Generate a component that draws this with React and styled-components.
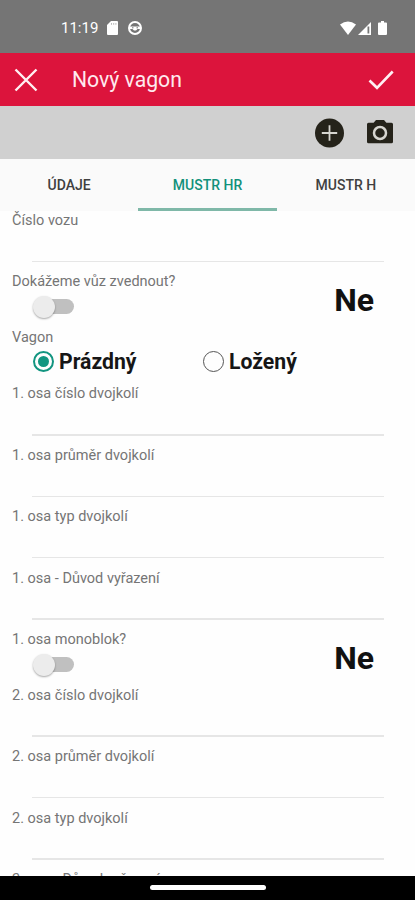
import React, { useState } from "react";
import styled, { createGlobalStyle } from "styled-components";

const GlobalStyle = createGlobalStyle`
  * {
    box-sizing: border-box;
  }

  body {
    margin: 0;
    background-color: #fff;
    font-family: Roboto, "Liberation Sans", sans-serif;
  }

  button {
    background: none;
    border: 0;
    padding: 0;
    font-family: inherit;
  }
`;

const Screen = styled.main`
  display: flex;
  flex-direction: column;
  width: 415px;
  height: 900px;
  overflow: hidden;
  background-color: #fefefe;
`;

const StatusBar = styled.div`
  display: flex;
  align-items: center;
  justify-content: space-between;
  flex: none;
  height: 53px;
  padding: 3px 28px 0 61px;
  background-color: #757575;
  color: #fff;
`;

const StatusGroup = styled.div`
  display: flex;
  align-items: center;
  gap: ${(props) => props.$gap};
`;

const Clock = styled.span`
  width: 38px;
  font-size: 15px;
  white-space: nowrap;
`;

const SteeringWheel = styled.svg`
  margin-left: 2px;
`;

const Battery = styled.svg`
  margin-left: 5px;
`;

const Header = styled.header`
  display: flex;
  align-items: center;
  flex: none;
  height: 53px;
  padding: 0 21px 0 14px;
  background-color: #dc143c;
  color: #fff;
`;

const Title = styled.h1`
  flex: 1;
  margin: 0 0 0 34px;
  font-size: 21.2px;
  font-weight: 400;
  color: #ffe9ee;
`;

const IconButton = styled.button`
  display: flex;
`;

const Toolbar = styled.div`
  display: flex;
  align-items: center;
  justify-content: flex-end;
  gap: 22px;
  flex: none;
  height: 53px;
  padding: 0 21px 0 0;
  background-color: #d0d0d0;
`;

const Tabs = styled.nav`
  display: flex;
  flex: none;
  height: 52px;
  background-color: #fafafa;
`;

const Tab = styled.button`
  flex: 1;
  padding-top: 3px;
  border-bottom: 3px solid ${(props) => (props.$active ? "#7fb8a8" : "transparent")};
  color: ${(props) => (props.$active ? "#12917a" : "#404040")};
  font-size: 14px;
  font-weight: 500;
`;

const Form = styled.section`
  flex: 1;
  min-height: 0;
  overflow: hidden;
`;

const Row = styled.div`
  height: ${(props) => props.$height};
  padding: 0 31px 0 12px;
`;

const Label = styled.div`
  height: 18px;
  line-height: 20px;
  font-size: 14.5px;
  color: #757575;
  white-space: nowrap;
`;

const Line = styled.div`
  height: 1.5px;
  margin: 31.7px 0 0 20px;
  background-color: #e6e6e6;
`;

const SwitchRow = styled.div`
  display: flex;
  align-items: flex-start;
  justify-content: space-between;
  height: 55.7px;
  padding: 0 41px 0 12px;
`;

const Answer = styled.span`
  margin-top: 8.6px;
  font-size: 32px;
  font-weight: 700;
  line-height: 38px;
  color: #111;
`;

const Track = styled.button`
  display: flex;
  align-items: center;
  width: 40px;
  height: 15px;
  margin: 9px 0 0 22px;
  border-radius: 8px;
  background-color: #c0c0c0;
`;

const Thumb = styled.span`
  flex: none;
  width: 22px;
  height: 22px;
  margin-left: ${(props) => (props.$on ? "19px" : "-1px")};
  border-radius: 50%;
  background-color: #ececec;
  box-shadow: 0 1px 2px rgba(0, 0, 0, 0.35);
`;

const Options = styled.div`
  display: grid;
  grid-template-columns: 170px 1fr;
  margin-left: 21px;
`;

const Option = styled.button`
  display: flex;
  align-items: center;
  gap: 5px;
  height: 30px;
  font-size: 21.2px;
  font-weight: 700;
  color: #161616;
`;

const Radio = styled.span`
  display: flex;
  align-items: center;
  justify-content: center;
  width: 21px;
  height: 21px;
  border: 2px solid ${(props) => (props.$checked ? "#129580" : "#555")};
  border-width: ${(props) => (props.$checked ? "2px" : "1.5px")};
  border-radius: 50%;

  &::after {
    content: "";
    width: 11px;
    height: 11px;
    border-radius: 50%;
    background-color: ${(props) => (props.$checked ? "#129580" : "transparent")};
  }
`;

const NavigationBar = styled.footer`
  display: flex;
  justify-content: center;
  flex: none;
  height: 24px;
  padding-top: 9px;
  background-color: #000;
`;

const HomeHandle = styled.div`
  width: 116px;
  height: 5px;
  border-radius: 3px;
  background-color: #fff;
`;

function Field({ label }) {
  return (
    <Row $height="61.4px">
      <Label>{label}</Label>
      <Line />
    </Row>
  );
}

function SwitchField({ label }) {
  const [on, setOn] = useState(false);
  return (
    <SwitchRow>
      <div>
        <Label>{label}</Label>
        <Track onClick={() => setOn(!on)}>
          <Thumb $on={on} />
        </Track>
      </div>
      <Answer>{on ? "Ano" : "Ne"}</Answer>
    </SwitchRow>
  );
}

function RadioField({ label, options }) {
  const [selected, setSelected] = useState(options[0]);
  return (
    <Row $height="56.4px">
      <Label>{label}</Label>
      <Options>
        {options.map((option) => (
          <Option key={option} onClick={() => setSelected(option)}>
            <Radio $checked={option === selected} />
            {option}
          </Option>
        ))}
      </Options>
    </Row>
  );
}

function App() {
  const [tab, setTab] = useState("MUSTR HR");
  return (
    <Screen>
      <GlobalStyle />
      <StatusBar>
        <StatusGroup $gap="8px">
          <Clock>11:19</Clock>
          <svg width="11" height="14" viewBox="0 0 11 14">
            <path d="M4 0h6q1 0 1 1v12q0 1-1 1H1q-1 0-1-1V4z" fill="#fff" />
            <path d="M4.5 2v1.8M6.7 2v1.8M8.9 2v1.8" stroke="#bbb" />
          </svg>
          <SteeringWheel width="14" height="14" viewBox="0 0 14 14">
            <circle cx="7" cy="7" r="6" fill="none" stroke="#fff" strokeWidth="2" />
            <path d="M1 5.5h12v2.5H9.5L8 9.5H6L4.5 8H1z" fill="#fff" />
            <path d="M4 6.8h1.5M8.5 6.8H10" stroke="#757575" />
          </SteeringWheel>
        </StatusGroup>
        <StatusGroup $gap="2px">
          <svg width="16" height="14" viewBox="0 0 16 14">
            <path d="M0 3.6Q8-2.6 16 3.6L8 14z" fill="#fff" />
          </svg>
          <svg width="13" height="13" viewBox="0 0 13 13">
            <path d="M13 0v13H0z" fill="#fff" />
            <path d="M10.4 4.5v7" stroke="#757575" strokeWidth="1.8" />
          </svg>
          <Battery width="9" height="14" viewBox="0 0 9 14">
            <path d="M3 0h3v1.4h2q1 0 1 1V13q0 1-1 1H1q-1 0-1-1V2.4q0-1 1-1h2z" fill="#fff" />
          </Battery>
        </StatusGroup>
      </StatusBar>
      <Header>
        <IconButton aria-label="Zavřít">
          <svg width="24" height="24" viewBox="0 0 24 24">
            <path d="M1.5 1.5l21 21M22.5 1.5l-21 21" stroke="#fff0f3" strokeWidth="2.4" />
          </svg>
        </IconButton>
        <Title>Nový vagon</Title>
        <IconButton aria-label="Uložit">
          <svg width="26" height="20" viewBox="0 0 26 20">
            <path d="M1.5 10.5l7.5 7.3L24.7 1.5" fill="none" stroke="#fff0f3" strokeWidth="2.6" />
          </svg>
        </IconButton>
      </Header>
      <Toolbar>
        <IconButton aria-label="Přidat">
          <svg width="30" height="30" viewBox="0 0 30 30">
            <circle cx="15.5" cy="15" r="14.5" fill="#25231a" />
            <path d="M15.5 7.3v15.4M7.8 15h15.4" stroke="#d6d5cf" strokeWidth="1.8" />
          </svg>
        </IconButton>
        <IconButton aria-label="Fotoaparát">
          <svg width="28" height="26" viewBox="0 0 28 26">
            <path
              d="M10 0h8l2.4 2.7H25.5q1.5 0 1.5 1.5V21.7q0 1.5-1.5 1.5H2.5q-1.5 0-1.5-1.5V4.2q0-1.5 1.5-1.5h5.1z"
              fill="#25231a"
            />
            <circle cx="14" cy="13" r="6" fill="none" stroke="#d6d5cf" strokeWidth="2.5" />
          </svg>
        </IconButton>
      </Toolbar>
      <Tabs>
        {["ÚDAJE", "MUSTR HR", "MUSTR H"].map((name) => (
          <Tab key={name} $active={name === tab} onClick={() => setTab(name)}>
            {name}
          </Tab>
        ))}
      </Tabs>
      <Form>
        <Field label="Číslo vozu" />
        <SwitchField label="Dokážeme vůz zvednout?" />
        <RadioField label="Vagon" options={["Prázdný", "Ložený"]} />
        <Field label="1. osa číslo dvojkolí" />
        <Field label="1. osa průměr dvojkolí" />
        <Field label="1. osa typ dvojkolí" />
        <Field label="1. osa - Důvod vyřazení" />
        <SwitchField label="1. osa monoblok?" />
        <Field label="2. osa číslo dvojkolí" />
        <Field label="2. osa průměr dvojkolí" />
        <Field label="2. osa typ dvojkolí" />
        <Field label="2. osa - Důvod vyřazení" />
      </Form>
      <NavigationBar>
        <HomeHandle />
      </NavigationBar>
    </Screen>
  );
}

export default App;
